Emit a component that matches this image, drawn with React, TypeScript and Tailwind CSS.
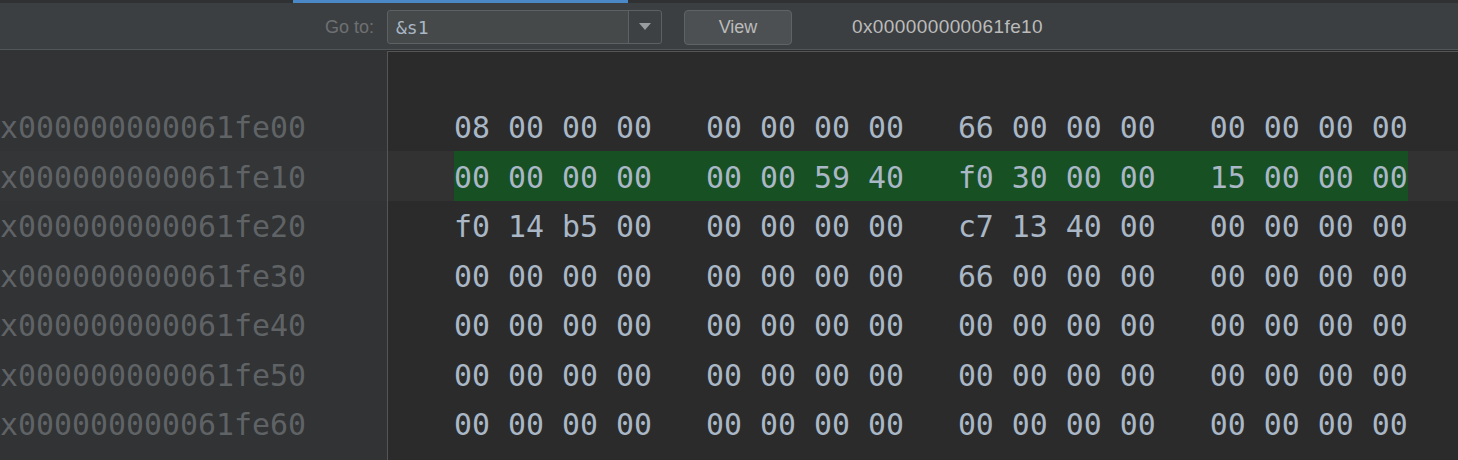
const mono = "font-['DejaVu_Sans_Mono','Liberation_Mono',monospace]";
const sans = "font-['Liberation_Sans','Noto_Sans',sans-serif]";

const rows = [
  { addr: 'x000000000061fe00', bytes: '08 00 00 00   00 00 00 00   66 00 00 00   00 00 00 00' },
  { addr: 'x000000000061fe10', bytes: '00 00 00 00   00 00 59 40   f0 30 00 00   15 00 00 00', current: true },
  { addr: 'x000000000061fe20', bytes: 'f0 14 b5 00   00 00 00 00   c7 13 40 00   00 00 00 00' },
  { addr: 'x000000000061fe30', bytes: '00 00 00 00   00 00 00 00   66 00 00 00   00 00 00 00' },
  { addr: 'x000000000061fe40', bytes: '00 00 00 00   00 00 00 00   00 00 00 00   00 00 00 00' },
  { addr: 'x000000000061fe50', bytes: '00 00 00 00   00 00 00 00   00 00 00 00   00 00 00 00' },
  { addr: 'x000000000061fe60', bytes: '00 00 00 00   00 00 00 00   00 00 00 00   00 00 00 00' },
];

export default function App() {
  return (
    <div className="w-[1458px] h-[460px] overflow-hidden flex flex-col bg-[#2b2b2b]">
      {/* tab strip */}
      <div className="h-[3px] bg-[#2f3133] flex shrink-0">
        <div className="ml-[293px] w-[335px] bg-[#4a88c7]" />
      </div>

      {/* toolbar */}
      <div className={`h-[47px] shrink-0 bg-[#3c3f41] border-b border-[#515658] flex items-center pt-[2px] ${sans}`}>
        <span className="ml-[325px] w-[49px] text-[18px] text-[#6e7073] whitespace-nowrap">Go to:</span>
        <div className="ml-[13px] w-[275px] h-[34px] flex rounded-[3px] border border-[#5e6163] bg-[#45494a]">
          <div className={`flex-1 flex items-center pl-[8px] text-[18px] text-[#a9b7c6] ${mono}`}>&amp;s1</div>
          <div className="w-[33px] border-l border-[#5e6163] bg-[#3e4143] flex items-center justify-center rounded-r-[3px]">
            <svg width="12" height="8" viewBox="0 0 12 8">
              <path d="M0 0 H12 L6 7 Z" fill="#9a9da0" />
            </svg>
          </div>
        </div>
        <button className="ml-[22px] w-[108px] h-[35px] rounded-[4px] border border-[#5e6366] bg-[#4c5052] text-[18px] text-[#bbbbbb]">
          View
        </button>
        <span className="ml-[60px] text-[19px] text-[#bbbbbb] tracking-[0.4px]">0x000000000061fe10</span>
      </div>

      {/* memory view */}
      <div className="flex-1 flex flex-col">
        <div className="h-[51.5px] shrink-0 flex">
          <div className="w-[387px] bg-[#313335]" />
          <div className="flex-1 mt-[1px] border-l border-t border-[#555555] bg-[#2b2b2b]" />
        </div>
        {rows.map((r) => (
          <div key={r.addr} className={`h-[49.5px] shrink-0 flex ${mono} text-[29.9px] leading-none`}>
            <div
              className={`w-[387px] flex items-center pt-[4px] ${r.current ? 'bg-[#333537]' : 'bg-[#313335]'}`}
            >
              <span className="whitespace-pre text-[#606366]">{r.addr}</span>
            </div>
            <div
              className={`flex-1 flex border-l border-[#555555] pl-[66px] ${r.current ? 'bg-[#323232]' : 'bg-[#2b2b2b]'}`}
            >
              <span
                className={`flex items-center pt-[4px] whitespace-pre text-[#a9b7c6] ${r.current ? 'bg-[#175023]' : ''}`}
              >
                {r.bytes}
              </span>
            </div>
          </div>
        ))}
        <div className="flex-1 flex">
          <div className="w-[387px] bg-[#313335]" />
          <div className="flex-1 border-l border-[#555555]" />
        </div>
      </div>
    </div>
  );
}
